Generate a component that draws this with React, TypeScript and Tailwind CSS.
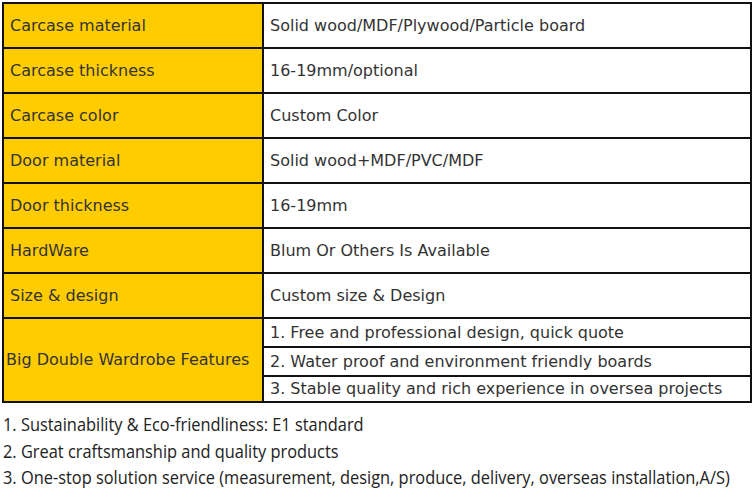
const specs = [
  { label: 'Carcase material', value: 'Solid wood/MDF/Plywood/Particle board' },
  { label: 'Carcase thickness', value: '16-19mm/optional' },
  { label: 'Carcase color', value: 'Custom Color' },
  { label: 'Door material', value: 'Solid wood+MDF/PVC/MDF' },
  { label: 'Door thickness', value: '16-19mm' },
  { label: 'HardWare', value: 'Blum Or Others Is Available' },
  { label: 'Size & design', value: 'Custom size & Design' },
]

const features = [
  '1. Free and professional design, quick quote',
  '2. Water proof and environment friendly boards',
  '3. Stable quality and rich experience in oversea projects',
]

const notes = [
  '1. Sustainability & Eco-friendliness: E1 standard',
  '2. Great craftsmanship and quality products',
  '3. One-stop solution service (measurement, design, produce, delivery, overseas installation,A/S)',
]

export default function App() {
  return (
    <div className="w-[754px] h-[490px] bg-white overflow-hidden">
      <div className="pt-[2px] pl-[2px]">
        <table
          className="w-[750px] border-collapse table-fixed text-[16px] text-[#333]"
          style={{ fontFamily: '"DejaVu Sans", Verdana, sans-serif' }}
        >
          <colgroup>
            <col className="w-[260px]" />
            <col />
          </colgroup>
          <tbody>
            {specs.map((row) => (
              <tr key={row.label} className="h-[45px]">
                <td className="border-2 border-[#111] bg-[#ffcc00] px-[6px] py-0 align-middle">{row.label}</td>
                <td className="border-2 border-[#111] px-[6px] py-0 align-middle">{row.value}</td>
              </tr>
            ))}
            {features.map((f, i) => (
              <tr key={f} className={i === 2 ? 'h-[25px]' : 'h-[29px]'}>
                {i === 0 && (
                  <td rowSpan={3} className="border-2 border-[#111] bg-[#ffcc00] pl-[2px] pr-0 py-0 align-middle">
                    Big Double Wardrobe Features
                  </td>
                )}
                <td className="border-2 border-[#111] px-[6px] py-0 align-middle whitespace-nowrap">{f}</td>
              </tr>
            ))}
          </tbody>
        </table>
      </div>

      {/* Notes below the table */}
      <div
        className="mt-[8px] pl-[3px] text-[18px] leading-[26.5px] text-[#222]"
        style={{ fontFamily: '"Open Sans", sans-serif' }}
      >
        {notes.map((n) => (
          <div key={n} className="whitespace-nowrap origin-left scale-x-[0.91]">{n}</div>
        ))}
      </div>
    </div>
  )
}
